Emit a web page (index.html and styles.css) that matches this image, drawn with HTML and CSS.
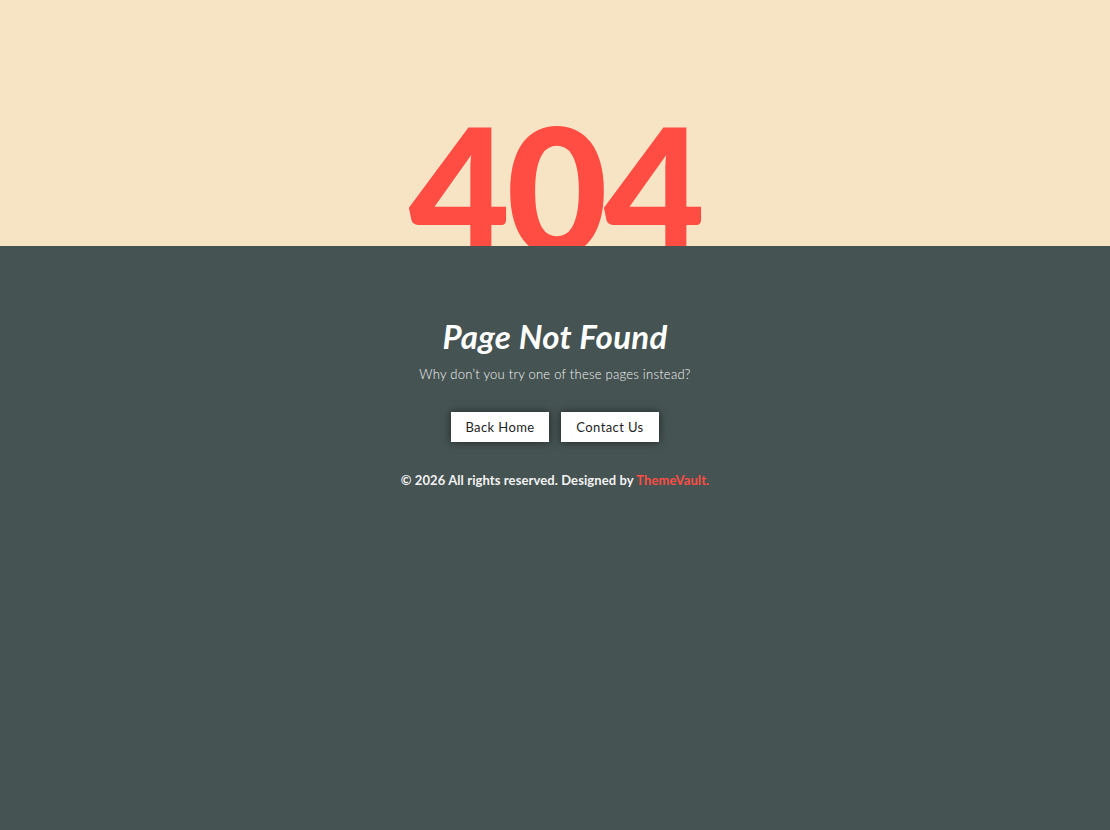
FILE: index.html
```html
<!DOCTYPE html>
<html lang="en">
<head>
<meta charset="utf-8">
<title>404 - Page Not Found</title>
<link rel="stylesheet" href="styles.css">
</head>
<body>
<header class="hero">
  <h1 class="code">404</h1>
</header>
<main class="content">
  <h2 class="title">Page Not Found</h2>
  <p class="lead">Why don’t you try one of these pages instead?</p>
  <div class="actions">
    <a class="btn" href="#">Back Home</a>
    <a class="btn" href="#">Contact Us</a>
  </div>
  <p class="footer">© 2026 All rights reserved. Designed by <a class="brand" href="#">ThemeVault.</a></p>
</main>
</body>
</html>
```
FILE: styles.css
```css
html, body {
  margin: 0;
  padding: 0;
}
body {
  background: #455352;
  font-family: Lato, "Open Sans", sans-serif;
  min-height: 100vh;
}
.hero {
  background: #f7e4c4;
  height: 246px;
  overflow: hidden;
  display: flex;
  justify-content: center;
}
.code {
  margin: 100px 0 0;
  font-size: 175px;
  line-height: 1;
  font-weight: 900;
  color: #ff4d44;
  letter-spacing: -4px;
}
.content {
  display: flex;
  flex-direction: column;
  align-items: center;
  padding-top: 71px;
}
.title {
  margin: 0;
  font-size: 33px;
  line-height: 38px;
  font-weight: 700;
  font-style: italic;
  color: #ffffff;
  letter-spacing: 0.3px;
}
.lead {
  margin: 10px 0 0;
  font-size: 13px;
  line-height: 18px;
  font-weight: 300;
  color: #f3f3f3;
  letter-spacing: 0.25px;
}
.actions {
  display: flex;
  gap: 12px;
  margin-top: 29px;
}
.btn {
  display: block;
  width: 98px;
  height: 30px;
  box-sizing: border-box;
  line-height: 30px;
  text-align: center;
  background: #ffffff;
  color: #1e2424;
  font-size: 13px;
  letter-spacing: 0.4px;
  text-decoration: none;
  box-shadow: 0 0 8px rgba(0, 0, 0, 0.55);
}
.footer {
  margin: 29px 0 0;
  font-size: 13px;
  line-height: 18px;
  font-weight: 700;
  color: #f2f2f2;
  letter-spacing: 0.1px;
}
.brand {
  color: #ff4d44;
  text-decoration: none;
}
```
